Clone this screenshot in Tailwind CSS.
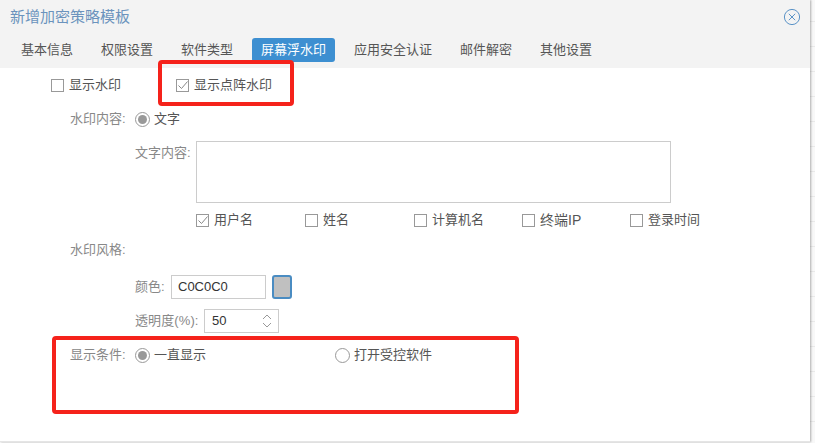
<!DOCTYPE html>
<html lang="zh">
<head>
    <meta charset="UTF-8">
    <title>新增加密策略模板</title>
    <script src="https://cdn.jsdelivr.net/npm/@tailwindcss/browser@4"></script>
</head>
<body class="w-[815px] h-[443px] overflow-hidden bg-[repeating-linear-gradient(180deg,#f8f8f8_0,#f8f8f8_21px,#e9e9e9_21px,#e9e9e9_22px,#f8f8f8_22px,#f8f8f8_25px)] font-['Liberation_Sans','Noto_Sans_CJK_SC',sans-serif] text-[13px] text-[#555]">
    <div class="relative w-[810px] h-[442px] bg-white border-b border-[#e5e5e5] shadow-[1px_0_2px_rgba(0,0,0,0.3)]">
        <!-- 标题和标签 -->
        <div class="h-[68px] bg-[#f3f3f3]">
            <div class="h-[34px] pl-[10px] pr-[9px] flex items-center justify-between">
                <span class="text-[15px] text-[#6b93bd]">新增加密策略模板</span>
                <svg class="w-[18px] h-[18px] text-[#5b93c7]" viewBox="0 0 18 18" fill="none" stroke="currentColor">
                    <circle cx="9" cy="9" r="7.6" />
                    <path d="M5.8 5.8 12.2 12.2M12.2 5.8 5.8 12.2" />
                </svg>
            </div>
            <div class="flex gap-[10px] pl-[12px] mt-[4px]">
                <span class="h-[24px] px-[9px] leading-[24px]">基本信息</span>
                <span class="h-[24px] px-[9px] leading-[24px]">权限设置</span>
                <span class="h-[24px] px-[9px] leading-[24px]">软件类型</span>
                <span class="h-[24px] px-[9px] leading-[24px] rounded-[3px] bg-[#3d8fd1] text-white">屏幕浮水印</span>
                <span class="h-[24px] px-[9px] leading-[24px]">应用安全认证</span>
                <span class="h-[24px] px-[9px] leading-[24px]">邮件解密</span>
                <span class="h-[24px] px-[9px] leading-[24px]">其他设置</span>
            </div>
        </div>

        <!-- 表单 -->
        <div class="flex flex-col">
            <div class="h-[18px] mt-[8px] flex items-center pl-[51px]">
                <span class="w-[13px] h-[13px] border border-[#999]"></span>
                <span class="ml-[5px] w-[107px]">显示水印</span>
                <span class="w-[13px] h-[13px] border border-[#999] flex items-center justify-center">
                    <svg class="w-[11px] h-[11px] text-[#888]" viewBox="0 0 11 11" fill="none" stroke="currentColor"><path d="M1.5 5.5 4.5 8.5 10.5 1.5" /></svg>
                </span>
                <span class="ml-[5px]">显示点阵水印</span>
            </div>

            <div class="h-[18px] mt-[16px] flex items-center pl-[70px] text-[#888]">
                <span class="w-[65px]">水印内容:</span>
                <span class="w-[15px] h-[15px] rounded-full border border-[#999] flex items-center justify-center"><span class="w-[9px] h-[9px] rounded-full bg-[#999]"></span></span>
                <span class="ml-[4px] text-[#555]">文字</span>
            </div>

            <div class="flex mt-[13px] pl-[135px]">
                <span class="w-[61px] h-[24px] leading-[24px] text-[#888]">文字内容:</span>
                <div class="w-[475px] h-[62px] border border-[#ccc]"></div>
            </div>

            <div class="flex mt-[8px] pl-[196px] h-[18px] items-center">
                <span class="w-[109px] flex items-center">
                    <span class="w-[13px] h-[13px] border border-[#999] flex items-center justify-center">
                        <svg class="w-[11px] h-[11px] text-[#888]" viewBox="0 0 11 11" fill="none" stroke="currentColor"><path d="M1.5 5.5 4.5 8.5 10.5 1.5" /></svg>
                    </span>
                    <span class="ml-[5px]">用户名</span>
                </span>
                <span class="w-[109px] flex items-center"><span class="w-[13px] h-[13px] border border-[#999]"></span><span class="ml-[5px]">姓名</span></span>
                <span class="w-[108px] flex items-center"><span class="w-[13px] h-[13px] border border-[#999]"></span><span class="ml-[5px]">计算机名</span></span>
                <span class="w-[108px] flex items-center"><span class="w-[13px] h-[13px] border border-[#999]"></span><span class="ml-[5px] text-[14px]">终端IP</span></span>
                <span class="flex items-center"><span class="w-[13px] h-[13px] border border-[#999]"></span><span class="ml-[5px]">登录时间</span></span>
            </div>

            <div class="h-[18px] mt-[12px] pl-[70px] leading-[18px] text-[#888]">水印风格:</div>

            <div class="flex items-center mt-[16px] pl-[135px] h-[24px]">
                <span class="w-[36px] text-[#888]">颜色:</span>
                <div class="w-[95px] h-[24px] pl-[6px] leading-[22px] border border-[#ccc] text-[#333]">C0C0C0</div>
                <span class="ml-[6px] w-[20px] h-[24px] rounded-[3px] border-2 border-[#4a8cc2] bg-[#c0c0c0]"></span>
            </div>

            <div class="flex items-center mt-[10px] pl-[135px] h-[24px]">
                <span class="w-[69px] text-[#888] tracking-[0.1px]">透明度(%):</span>
                <div class="w-[75px] h-[24px] pl-[7px] pr-[5px] flex items-center justify-between border border-[#ccc] text-[#333]">
                    50
                    <svg class="w-[12px] h-[16px] text-[#999]" viewBox="0 0 12 16" fill="none" stroke="currentColor"><path d="M2 6 6 2 10 6M2 10 6 14 10 10" /></svg>
                </div>
            </div>

            <div class="h-[18px] mt-[13px] flex items-center pl-[70px] text-[#888]">
                <span class="w-[65px]">显示条件:</span>
                <span class="w-[15px] h-[15px] rounded-full border border-[#999] flex items-center justify-center"><span class="w-[9px] h-[9px] rounded-full bg-[#999]"></span></span>
                <span class="ml-[4px] w-[181px] text-[#555]">一直显示</span>
                <span class="w-[15px] h-[15px] rounded-full border border-[#999]"></span>
                <span class="ml-[4px] text-[#555]">打开受控软件</span>
            </div>
        </div>

        <!-- 红色标注框 -->
        <div class="absolute left-[158px] top-[60px] w-[136px] h-[46px] rounded-[4px] border-[4px] border-[#f5221b]"></div>
        <div class="absolute left-[52px] top-[336px] w-[467px] h-[78px] rounded-[4px] border-[4px] border-[#f5221b]"></div>
    </div>
</body>
</html>
